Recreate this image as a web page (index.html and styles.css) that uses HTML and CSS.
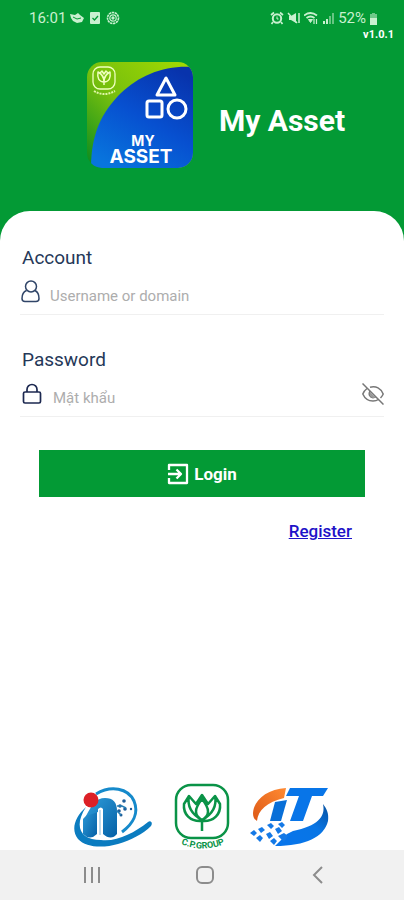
FILE: index.html
```html
<!DOCTYPE html>
<html lang="vi">
<head>
    <meta charset="utf-8">
    <meta name="viewport" content="width=device-width, initial-scale=1.0">
    <title>My Asset</title>
    <link rel="stylesheet" href="styles.css">
</head>
<body>
    <header class="top">
        <div class="status">
            <div class="status-group">
                <span>16:01</span>
                <svg class="status-icon" viewBox="0 0 14 14" fill="currentColor"><path d="M0 3l5 1 3-2 2 2 4 3-2 4-5 1-4-2-2-3z"/><path d="M3 6l4 2 4-1" fill="none" stroke="#039a35"/></svg>
                <svg class="status-icon" viewBox="0 0 14 14"><rect x="2" y="1" width="10" height="12" rx="1" fill="currentColor"/><path d="M4.500 7l2 2L10 5" fill="none" stroke="#039a35" stroke-width="1.300"/></svg>
                <svg class="status-icon" viewBox="0 0 14 14" fill="none" stroke="currentColor"><circle cx="7" cy="7" r="5.500" stroke-width="1.600" stroke-dasharray="2.400 .6"/><circle cx="7" cy="7" r="3.200" stroke-width="1.200"/><circle cx="7" cy="7" r="1.200" fill="currentColor"/></svg>
            </div>
            <div class="status-group status-right">
                <svg class="status-icon" viewBox="0 0 14 14" fill="none" stroke="currentColor"><circle cx="7" cy="7.500" r="4.200" stroke-width="2"/><path d="M1 4l3-2.500M13 4l-3-2.500M3 11l-1.500 2M11 11l1.500 2" stroke-width="1.700"/><path d="M7 5.500v2.500h1.500"/></svg>
                <svg class="status-icon" viewBox="0 0 14 14" fill="currentColor"><path d="M2 5h2l5-3v10L4 9H2z"/><path d="M1 2l9 10M12 2v10" fill="none" stroke="currentColor" stroke-width="1.500"/></svg>
                <svg class="status-icon" viewBox="0 0 14 14" fill="none" stroke="currentColor"><path d="M0 4.500q6.500-5 13 0M2.500 7q4-3 8 0" stroke-width="1.800"/><path d="M4.500 8.500h4l-2 3z" fill="currentColor"/><path d="M10 8v5M12.500 8v5" stroke-width="1.200"/></svg>
                <svg class="status-icon" viewBox="0 0 14 14" fill="currentColor"><path d="M2 10h2v3H2zM5 8h2v5H5z"/><path d="M8 5h2v8H8zM11 2h2v11h-2z" opacity=".5"/></svg>
                <span>52%</span>
                <svg class="battery" viewBox="0 0 9 13" fill="currentColor"><path d="M3 1h3v1h2v4H1V2h2z" opacity=".55"/><path d="M1 6h7v7H1z"/></svg>
            </div>
        </div>
        <div class="version">v1.0.1</div>
        <div class="brand">
            <svg class="app-logo" viewBox="0 0 106 106" role="img" aria-label="My Asset">
                <defs>
                    <linearGradient id="leaf" x1="1" y1="0" x2="0" y2="1"><stop offset="0" stop-color="#a5dc00"/><stop offset=".55" stop-color="#75be0e"/><stop offset="1" stop-color="#078a20"/></linearGradient>
                    <linearGradient id="sea" x1=".8" y1="0" x2=".2" y2="1"><stop offset="0" stop-color="#0833ac"/><stop offset=".5" stop-color="#0750d0"/><stop offset="1" stop-color="#0875dd"/></linearGradient>
                    <clipPath id="tile"><rect width="106" height="106" rx="15"/></clipPath>
                </defs>
                <g clip-path="url(#tile)">
                    <rect width="106" height="106" fill="url(#leaf)"/>
                    <path d="M106 5C78 3 53 13 34 31 15 50 4 71 4 106h102z" fill="url(#sea)"/>
                </g>
                <g fill="none" stroke="#fff" stroke-linejoin="round">
                    <path d="M79 16l-9 17h18z" stroke-width="3"/>
                    <rect x="60" y="39" width="15" height="16" rx="2" stroke-width="3"/>
                    <circle cx="90" cy="47" r="9" stroke-width="3"/>
                    <rect x="6" y="5" width="22" height="22" rx="7" stroke="#efffbf" stroke-width="1.300"/>
                    <path d="M17 23v-5M17 20c-5 0-7-4-6-10 4 2 6 5 6 10 0-5 2-8 6-10 1 6-1 10-6 10M13 11l2-2 2 3 2-3 2 2" stroke="#efffbf" stroke-width="1.500"/>
                    <path d="M7 29q10 6 21 0" stroke="#dff7a6" stroke-width="2" stroke-dasharray="2 1"/>
                </g>
                <text class="logo-text"><tspan class="logo-my" x="56" y="84">MY</tspan><tspan x="54" y="101">ASSET</tspan></text>
            </svg>
            <h1 class="title">My Asset</h1>
        </div>
    </header>

    <main class="sheet">
        <form class="login">
            <div class="field">
                <label class="label" for="account">Account</label>
                <div class="line">
                    <svg class="icon-user" viewBox="0 0 20 24" fill="none" stroke="#304568" stroke-width="1.500"><circle cx="11" cy="6.500" r="5.500"/><path d="M6.500 10.500C3 12 2 14 2 18.500 2 20.500 3 21.500 5 21.500h11c2 0 3-1 3-3 0-4.500-1-6.500-4-8"/></svg>
                    <input class="input" id="account" type="text" placeholder="Username or domain">
                </div>
            </div>
            <div class="field">
                <label class="label" for="password">Password</label>
                <div class="line">
                    <svg class="icon-lock" viewBox="0 0 23 24" fill="none" stroke="#1c2850" stroke-width="1.700"><rect x="3.500" y="10" width="17" height="11" rx="1.500"/><path d="M7 10V7.500a5 5 0 0 1 10 0V10"/></svg>
                    <input class="input" id="password" type="password" placeholder="Mật khẩu">
                    <button class="toggle" type="button" aria-label="Show password">
                        <svg viewBox="0 0 22 22" fill="none" stroke="#777" stroke-width="1.500"><path d="M5 5.500C3 7 1.500 9 .8 11c2 4.500 6 7 10.200 7 2 0 4-.5 5.500-1.500M8 4.200c6-1.700 11 1.300 13.200 6.800-.6 1.500-1.500 2.800-2.700 4M7.800 8.500c-1.500 3 .2 6.200 3.200 6.200 1 0 2-.3 2.700-.9M.5.500l21 21"/><path d="M8 9l5.500 5.500c-2 1-4 .4-5-1.200-.8-1.300-1-2.800-.5-4.300z" fill="#999" stroke="none"/></svg>
                    </button>
                </div>
            </div>
            <button class="submit" type="submit">
                <svg class="icon-login" viewBox="0 0 22 22" fill="none" stroke="#fff" stroke-width="2.300" stroke-linejoin="round"><path d="M2 7V2h18v18H2v-5M1 11h12M9.500 6.500L14 11l-4.500 4.500"/></svg>
                Login
            </button>
            <a class="register" href="#register">Register</a>
        </form>

        <footer class="partners">
            <svg class="partner" viewBox="0 0 80 66" role="img" aria-label="iT">
                <defs><linearGradient id="pillar" x1="0" y1="0" x2="1" y2="1"><stop offset="0" stop-color="#2f9edb"/><stop offset="1" stop-color="#0560a6"/></linearGradient></defs>
                <path d="M22 12C37 3 54 6 60 19c5 12-1 23-12 31" fill="none" stroke="#168acb" stroke-width="3"/>
                <path d="M12 25C0 36-3 48 4 57c8 9 26 9 40 5 13-4 25-10 33-18 2-3 0-6-3-4C60 51 43 60 27 58 7 58-1 45 12 25z" fill="#0b7cc0"/>
                <path d="M9 52V37l14-15v30q-7 7-14 0z" fill="url(#pillar)"/>
                <path d="M12 34C18 23 22 16 31 16q12 0 12 13v23q-6 7-14 0V27q-2-3-5 0v3z" fill="url(#pillar)"/>
                <path d="M26 28v25" stroke="#86b9dc"/>
                <circle cx="17" cy="18" r="7.500" fill="#dc2027"/>
                <g fill="#1c5c98"><circle cx="50" cy="19" r="1.800"/><circle cx="46" cy="24" r="1.800"/><circle cx="51" cy="27" r="1.800"/><circle cx="57" cy="27" r="1.200"/><circle cx="45" cy="29" r="1.800"/><circle cx="47" cy="33" r="1.500"/></g>
                <path d="M43 24h5l4 2M42 28l5 5" stroke="#267fb6" fill="none" stroke-width="1.500"/>
            </svg>
            <svg class="partner partner-cp" viewBox="0 0 56 68" role="img" aria-label="C.P. Group">
                <g fill="none" stroke="#0a9347">
                    <rect x="2" y="3" width="52" height="53" rx="15" stroke-width="2.500"/>
                    <path d="M28 49V38M28 39C16 40 9 32 10 22l5-8 7 8 6-9 6 9 7-8 5 8c1 10-6 18-18 17zM28 38C20 33 20 27 28 17 36 27 36 33 28 38M15 14q-3 15 13 24M41 14q3 15-13 24" stroke-width="2.500" stroke-linejoin="round"/>
                </g>
                <path id="arc" d="M3 60q25 13 52 0" fill="none"/>
                <text class="arc-text"><textPath href="#arc" startOffset="50%">C.P.GROUP</textPath></text>
            </svg>
            <svg class="partner" viewBox="0 0 80 66" role="img" aria-label="IT">
                <defs>
                    <linearGradient id="flame" x1="1" y1="0" x2="0" y2="1"><stop offset="0" stop-color="#ff8a32"/><stop offset="1" stop-color="#dd5917"/></linearGradient>
                    <linearGradient id="wave" x1="1" y1="0" x2="0" y2="1"><stop offset="0" stop-color="#07519f"/><stop offset=".4" stop-color="#0875e5"/><stop offset="1" stop-color="#0875ec"/></linearGradient>
                </defs>
                <path d="M36 6C17 7 4 18 3 31c0 4 1 6 4 8 1-11 10-19 27-23z" fill="url(#flame)"/>
                <path d="M25 20l12-2-6 21H20z" fill="#086fd8"/>
                <path d="M40 6h38l-5 8H62l-9 25H40l9-25H36z" fill="#0875e8"/>
                <path d="M73 22c3 13-6 22-30 27l-6 3-12 12c31 0 49-9 53-25 1-7-1-12-5-17z" fill="url(#wave)"/>
                <path d="M17 43l4-2 3 3-3 3zM8 47l4-2 3 3-4 3zM0 51l4-3 3 3-3 3zM6 56l4-3 3 3-3 4zM16 52l4-2 3 4-4 3zM25 47l4-2 3 4-4 3zM28 42l4-2 3 3-3 3zM20 59l4-3 3 3-3 4zM28 54l6-3 4 3-4 6z" fill="#1479e6"/>
            </svg>
        </footer>
    </main>

    <nav class="navbar" aria-label="System">
        <button class="nav-btn" type="button" aria-label="Recent apps"><svg viewBox="0 0 20 20" fill="none" stroke="#8c8c8c" stroke-width="2"><path d="M3 2v16M10 2v16M17 2v16"/></svg></button>
        <button class="nav-btn" type="button" aria-label="Home"><svg viewBox="0 0 20 20" fill="none" stroke="#8c8c8c" stroke-width="2"><rect x="2" y="2" width="16" height="16" rx="5"/></svg></button>
        <button class="nav-btn" type="button" aria-label="Back"><svg viewBox="0 0 20 20" fill="none" stroke="#8c8c8c" stroke-width="2"><path d="M14 2L6 10l8 8"/></svg></button>
    </nav>
</body>
</html>
```
FILE: styles.css
```css
* {
    box-sizing: border-box;
}
body {
    display: flex;
    flex-direction: column;
    min-height: 100vh;
    margin: 0;
    font-family: Roboto, "Liberation Sans", sans-serif;
    background-color: #039a35;
}
svg {
    display: block;
}
button {
    padding: 0;
    border: none;
    background: none;
    font-family: inherit;
}
.top {
    color: white;
}
.status {
    display: flex;
    justify-content: space-between;
    padding: 8px 26px 0 29px;
    font-size: 15px;
    line-height: 20px;
    color: #c9f0cf;
}
.status-group {
    display: flex;
    align-items: center;
    gap: 4px;
}
.status-right {
    gap: 3px;
}
.status-icon {
    width: 14px;
    height: 14px;
}
.battery {
    width: 9px;
    height: 13px;
}
.version {
    padding-right: 10px;
    font-size: 11px;
    font-weight: bold;
    line-height: 14px;
    text-align: right;
}
.brand {
    display: flex;
    align-items: center;
    justify-content: center;
    gap: 26px;
    padding: 20px 0 43px 28px;
}
.app-logo {
    width: 106px;
    height: 106px;
}
.logo-text {
    font-family: Inter, sans-serif;
    font-weight: bold;
    font-size: 19px;
    text-anchor: middle;
    fill: white;
}
.logo-my {
    font-size: 14px;
}
.title {
    margin: 12px 0 0;
    font-size: 30px;
    line-height: 32px;
}
.sheet {
    display: flex;
    flex-direction: column;
    flex: 1;
    padding: 35px 20px 0;
    border-radius: 30px 30px 0 0;
    background-color: white;
}
.login {
    display: flex;
    flex-direction: column;
}
.field {
    margin-bottom: 33px;
}
.label {
    display: block;
    padding-left: 2px;
    font-size: 19px;
    line-height: 24px;
    color: #253858;
}
.line {
    display: flex;
    align-items: center;
    gap: 10px;
    height: 45px;
    border-bottom: 1px solid #f0f0f0;
}
.icon-user, .icon-lock {
    flex: none;
    width: 20px;
    height: 24px;
}
.icon-lock {
    width: 23px;
}
.input {
    flex: 1;
    min-width: 0;
    padding: 8px 0 0;
    border: none;
    outline: none;
    background: none;
    font-family: inherit;
    font-size: 15px;
    line-height: 20px;
    color: #253858;
}
.input::placeholder {
    color: #adadad;
}
.toggle svg {
    width: 22px;
    height: 22px;
}
.submit {
    display: flex;
    align-items: center;
    justify-content: center;
    gap: 5px;
    height: 47px;
    margin: 0 19px;
    font-size: 17px;
    font-weight: bold;
    color: white;
    background-color: #039a35;
}
.icon-login {
    width: 22px;
    height: 22px;
}
.register {
    align-self: flex-end;
    margin: 22px 32px 0 0;
    font-size: 17px;
    font-weight: 500;
    line-height: 24px;
    color: #1e12c8;
}
.partners {
    display: flex;
    justify-content: center;
    gap: 20px;
    margin-top: auto;
}
.partner {
    width: 80px;
    height: 66px;
}
.partner-cp {
    width: 56px;
    height: 68px;
}
.arc-text {
    font-size: 9px;
    font-weight: bold;
    text-anchor: middle;
    fill: #0a9347;
}
.navbar {
    display: flex;
    justify-content: center;
    gap: 93px;
    padding: 15px 0 15px 5px;
    background-color: #f1f1f1;
}
.nav-btn svg {
    width: 20px;
    height: 20px;
}
```
